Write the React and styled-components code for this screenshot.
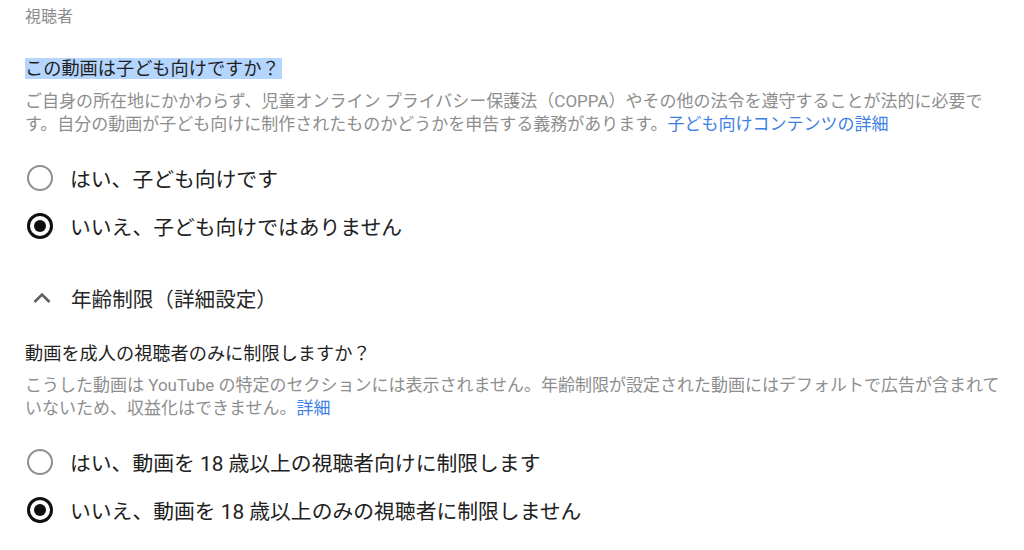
import React from "react";
import styled, { createGlobalStyle } from "styled-components";

const GlobalStyle = createGlobalStyle`
  body {
    margin: 0;
    background: #ffffff;
    font-family: Roboto, "Noto Sans CJK JP", sans-serif;
    color: #1f1f1f;
    overflow: hidden;
  }
`;

const Page = styled.div`
  padding: 5px 0 0 25px;
`;

const SectionLabel = styled.div`
  font-size: 16px;
  line-height: 24px;
  color: #8c8c8c;
`;

const Question = styled.div`
  margin-top: ${(p) => p.$top || 0}px;
  font-size: 18.2px;
  line-height: 24px;
  color: #1f1f1f;
`;

const Selected = styled.span`
  background: #b4d5fe;
  padding: 0 2px 0 0;
`;

const Description = styled.p`
  margin: 8.5px 0 0;
  width: 982px;
  font-size: 17px;
  line-height: 23px;
  color: #8e8e8e;
`;

const Link = styled.a`
  color: #3d80e4;
  text-decoration: none;
`;

const RadioGroup = styled.div`
  margin-top: 18px;
  display: flex;
  flex-direction: column;
`;

const Option = styled.label`
  display: flex;
  align-items: center;
  gap: 17px;
  height: 48px;
  padding-left: 2px;
  font-size: 20.8px;
  color: #212121;
  cursor: pointer;
`;

const Circle = styled.span`
  box-sizing: border-box;
  width: 26px;
  height: 26px;
  border-radius: 50%;
  border: ${(p) => (p.$checked ? "3px solid #0f0f0f" : "2.5px solid #8f8f8f")};
  display: flex;
  align-items: center;
  justify-content: center;
  flex-shrink: 0;

  &::after {
    content: "";
    width: 12px;
    height: 12px;
    border-radius: 50%;
    background: #0f0f0f;
    display: ${(p) => (p.$checked ? "block" : "none")};
  }
`;

const Toggle = styled.div`
  margin-top: 28px;
  display: flex;
  align-items: center;
  gap: 20px;
  height: 40px;
  padding-left: 8px;
  font-size: 20.6px;
  color: #282828;

  svg {
    flex-shrink: 0;
  }
`;

function Radio({ checked, children }) {
  return (
    <Option>
      <Circle $checked={checked} />
      <span>{children}</span>
    </Option>
  );
}

export default function App() {
  return (
    <>
      <GlobalStyle />
      <Page>
        <SectionLabel>視聴者</SectionLabel>
        <Question $top={28}>
          <Selected>この動画は子ども向けですか？</Selected>
        </Question>
        <Description>
          ご自身の所在地にかかわらず、児童オンライン プライバシー保護法（COPPA）やその他の法令を遵守することが法的に必要です。自分の動画が子ども向けに制作されたものかどうかを申告する義務があります。
          <Link href="#">子ども向けコンテンツの詳細</Link>
        </Description>
        <RadioGroup>
          <Radio>はい、子ども向けです</Radio>
          <Radio checked>いいえ、子ども向けではありません</Radio>
        </RadioGroup>
        <Toggle>
          <svg width="18" height="12" viewBox="0 0 18 12">
            <path d="M1.5 10 L9 2.5 L16.5 10" fill="none" stroke="#606060" strokeWidth="2.6" />
          </svg>
          <span>年齢制限（詳細設定）</span>
        </Toggle>
        <Question $top={24}>動画を成人の視聴者のみに制限しますか？</Question>
        <Description>
          こうした動画は YouTube の特定のセクションには表示されません。年齢制限が設定された動画にはデフォルトで広告が含まれていないため、収益化はできません。
          <Link href="#">詳細</Link>
        </Description>
        <RadioGroup>
          <Radio>はい、動画を 18 歳以上の視聴者向けに制限します</Radio>
          <Radio checked>いいえ、動画を 18 歳以上のみの視聴者に制限しません</Radio>
        </RadioGroup>
      </Page>
    </>
  );
}
